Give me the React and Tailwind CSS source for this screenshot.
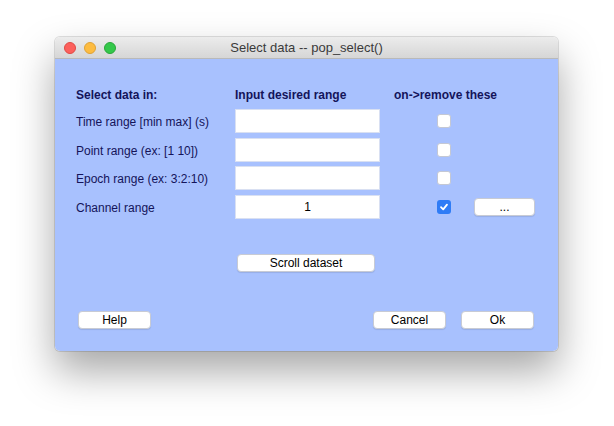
export default function App() {
  const rows = [
    { label: "Time range [min max] (s)", value: "", checked: false },
    { label: "Point range (ex: [1 10])", value: "", checked: false },
    { label: "Epoch range (ex: 3:2:10)", value: "", checked: false },
    { label: "Channel range", value: "1", checked: true },
  ];

  return (
    <div className="w-[614px] h-[426px] bg-white pt-[37px] pl-[55px] font-['Liberation_Sans',Arial,sans-serif]">
      <div className="w-[503px] rounded-[5px] overflow-hidden shadow-[0_20px_40px_rgba(0,0,0,0.35),0_0_0_1px_rgba(0,0,0,0.12)]">
        {/* title bar */}
        <div className="h-[22px] relative flex items-center justify-center bg-gradient-to-b from-[#ececec] to-[#d6d6d6] border-b border-[#b9b9b9]">
          <div className="absolute left-[9px] top-[5px] flex gap-[8px]">
            <span className="w-[12px] h-[12px] rounded-full bg-[#fc605c] border border-[#de4a45]"></span>
            <span className="w-[12px] h-[12px] rounded-full bg-[#fdbc40] border border-[#dea236]"></span>
            <span className="w-[12px] h-[12px] rounded-full bg-[#34c84a] border border-[#2aa63a]"></span>
          </div>
          <span className="text-[13px] text-[#3a3a3a] pt-[1px]">Select data -- pop_select()</span>
        </div>

        {/* body */}
        <div className="bg-[#a8c1fe] pt-[29px] pb-[22px] pl-[21px] text-[12px] text-[#14145a]">
          <div className="flex items-center h-[14px] font-bold">
            <div className="w-[159px]">Select data in:</div>
            <div className="w-[159px]">Input desired range</div>
            <div>on-&gt;remove these</div>
          </div>

          <div className="mt-[7px] flex flex-col gap-[4.5px]">
            {rows.map((r) => (
              <div key={r.label} className="flex items-center h-[24px]">
                <div className="w-[159px] pt-[2px]">{r.label}</div>
                <div className="w-[145px] h-[24px] bg-white border border-[#d9e0f2] flex items-center justify-center text-black">
                  {r.value}
                </div>
                <div className="ml-[57px] w-[14px] h-[14px]">
                  {r.checked ? (
                    <div className="w-[14px] h-[14px] rounded-[3px] bg-[#2f7cf6] flex items-center justify-center">
                      <svg width="10" height="10" viewBox="0 0 10 10">
                        <path d="M2 5.2 L4.2 7.4 L8 2.6" fill="none" stroke="white" strokeWidth="1.8" strokeLinecap="round" strokeLinejoin="round" />
                      </svg>
                    </div>
                  ) : (
                    <div className="w-[14px] h-[14px] rounded-[3px] bg-white border border-[#c4c8d4]"></div>
                  )}
                </div>
                {r.checked && (
                  <button className="ml-[23px] w-[61px] h-[18px] bg-white rounded-[4px] border border-[#c8cbd4] shadow-[0_1px_1px_rgba(0,0,0,0.1)] text-[12px] text-black leading-none">
                    ...
                  </button>
                )}
              </div>
            ))}
          </div>

          <div className="mt-[35px] pl-[161px]">
            <button className="w-[138px] h-[18px] bg-white rounded-[4px] border border-[#c8cbd4] shadow-[0_1px_1px_rgba(0,0,0,0.1)] text-[12px] text-black leading-none">
              Scroll dataset
            </button>
          </div>

          <div className="mt-[39px] flex items-center pr-[24px]">
            <button className="ml-[2px] w-[73px] h-[18px] bg-white rounded-[4px] border border-[#c8cbd4] shadow-[0_1px_1px_rgba(0,0,0,0.1)] text-[12px] text-black leading-none">
              Help
            </button>
            <div className="flex-1"></div>
            <button className="w-[73px] h-[18px] bg-white rounded-[4px] border border-[#c8cbd4] shadow-[0_1px_1px_rgba(0,0,0,0.1)] text-[12px] text-black leading-none">
              Cancel
            </button>
            <button className="ml-[15px] w-[73px] h-[18px] bg-white rounded-[4px] border border-[#c8cbd4] shadow-[0_1px_1px_rgba(0,0,0,0.1)] text-[12px] text-black leading-none">
              Ok
            </button>
          </div>
        </div>
      </div>
    </div>
  );
}
